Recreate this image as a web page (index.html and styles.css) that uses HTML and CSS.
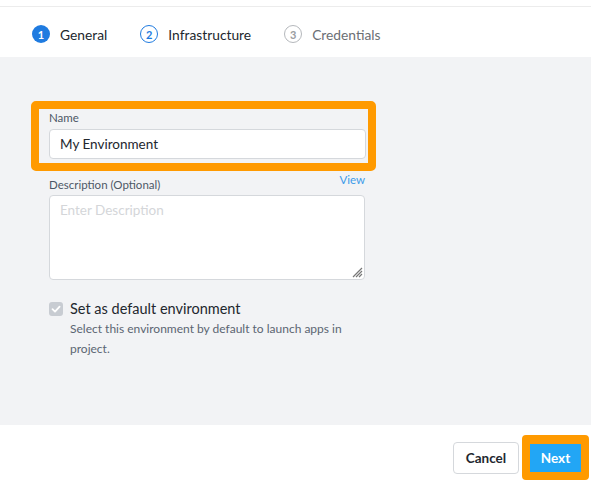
FILE: index.html
```html
<!DOCTYPE html>
<html>
<head>
<meta charset="utf-8">
<link rel="stylesheet" href="styles.css">
</head>
<body>
<div class="page">
  <div class="topline"></div>
  <div class="stepper">
    <div class="step active"><span class="num">1</span><span class="lbl">General</span></div>
    <div class="step next"><span class="num">2</span><span class="lbl">Infrastructure</span></div>
    <div class="step todo"><span class="num">3</span><span class="lbl">Credentials</span></div>
  </div>
  <div class="main">
    <div class="highlight">
      <div class="label">Name</div>
      <div class="input">My Environment</div>
    </div>
    <div class="field">
      <div class="label-row"><span class="label">Description (Optional)</span><span class="view">View</span></div>
      <div class="textarea"><span class="placeholder">Enter Description</span>
        <svg class="grip" width="12" height="12" viewBox="0 0 12 12"><path d="M11 2 L2 11 M11 5 L5 11 M11 8 L8 11" stroke="#777" stroke-width="1.2" fill="none"/></svg>
      </div>
    </div>
    <div class="check-row">
      <span class="checkbox"><svg width="14" height="14" viewBox="0 0 14 14"><path d="M3.5 7.2 L6 9.6 L10.6 4.6" stroke="#fff" stroke-width="1.8" fill="none" stroke-linecap="round" stroke-linejoin="round"/></svg></span>
      <div class="check-text">
        <div class="check-label">Set as default environment</div>
        <div class="help">Select this environment by default to launch apps in project.</div>
      </div>
    </div>
  </div>
  <div class="footer">
    <button class="btn cancel">Cancel</button>
    <div class="next-hl"><button class="btn primary">Next</button></div>
  </div>
</div>
</body>
</html>
```

FILE: styles.css
```css
* { box-sizing: border-box; }
html, body { margin: 0; padding: 0; background: #fff; }
body { font-family: "Lato", "Open Sans", sans-serif; color: #22272e; width: 591px; height: 481px; overflow: hidden; }
.topline { margin-top: 6px; height: 1px; background: #ececec; }
.stepper { height: 50px; display: flex; align-items: center; padding: 4px 0 0 32px; }
.step { display: flex; align-items: center; margin-right: 33px; font-size: 13.8px; }
.num { width: 18px; height: 18px; border-radius: 50%; display: flex; align-items: center; justify-content: center; font-size: 11px; font-weight: 700; margin-right: 10px; }
.active .num { background: #1f7be0; color: #fff; }
.next .num { border: 1.5px solid #1f7be0; color: #1f7be0; }
.todo .num { border: 1.5px solid #b5b8bc; color: #9a9da1; }
.todo .lbl { color: #6b6f75; }
.main { background: #f2f3f5; height: 368px; padding: 44px 0 0 31px; }
.highlight { width: 345px; border: 8px solid #ff9a00; border-radius: 5px; padding: 1px 2px 4px 10px; }
.label { font-size: 11.5px; color: #4d5866; line-height: 15px; }
.highlight .label { margin-bottom: 4px; }
.input { height: 30px; background: #fff; border: 1px solid #d5d8dc; border-radius: 4px; font-size: 13.5px; padding: 0 10px; display: flex; align-items: center; color: #22272e; }
.field { width: 316px; margin-left: 18px; margin-top: 0; }
.label-row { display: flex; justify-content: space-between; align-items: flex-start; height: 17px; }
.label-row .label { margin-top: 6px; }
.view { font-size: 11.5px; color: #3d9be9; line-height: 13px; margin-top: 2px; }
.textarea { position: relative; margin-top: 7px; height: 85px; background: #fff; border: 1px solid #d5d8dc; border-radius: 4px; padding: 6px 10px; font-size: 13.5px; }
.placeholder { color: #d4d6d9; }
.grip { position: absolute; right: 1px; bottom: 1px; }
.check-row { display: flex; align-items: flex-start; margin-left: 18px; margin-top: 22px; }
.checkbox { width: 14px; height: 14px; background: #c8ccd2; border-radius: 3px; margin-right: 7px; display: flex; }
.check-label { font-size: 14.5px; line-height: 15px; color: #22272e; margin-top: -1px; }
.help { font-size: 12px; line-height: 20px; color: #5b6572; width: 285px; margin-top: 3px; }
.footer { height: 56px; display: flex; justify-content: flex-end; align-items: center; padding: 9px 2px 0 0; }
.btn { font-family: inherit; font-weight: 700; font-size: 13.5px; border-radius: 4px; cursor: pointer; }
.cancel { height: 32px; width: 66px; background: #fff; border: 1px solid #d5d8dc; color: #22272e; margin-right: 3px; }
.next-hl { border: 8px solid #ff9a00; border-top-width: 9px; border-radius: 4px; background: #ff9a00; }
.primary { height: 28px; width: 51px; background: #22a6f5; border: none; color: #fff; border-radius: 0; display: block; }
```
